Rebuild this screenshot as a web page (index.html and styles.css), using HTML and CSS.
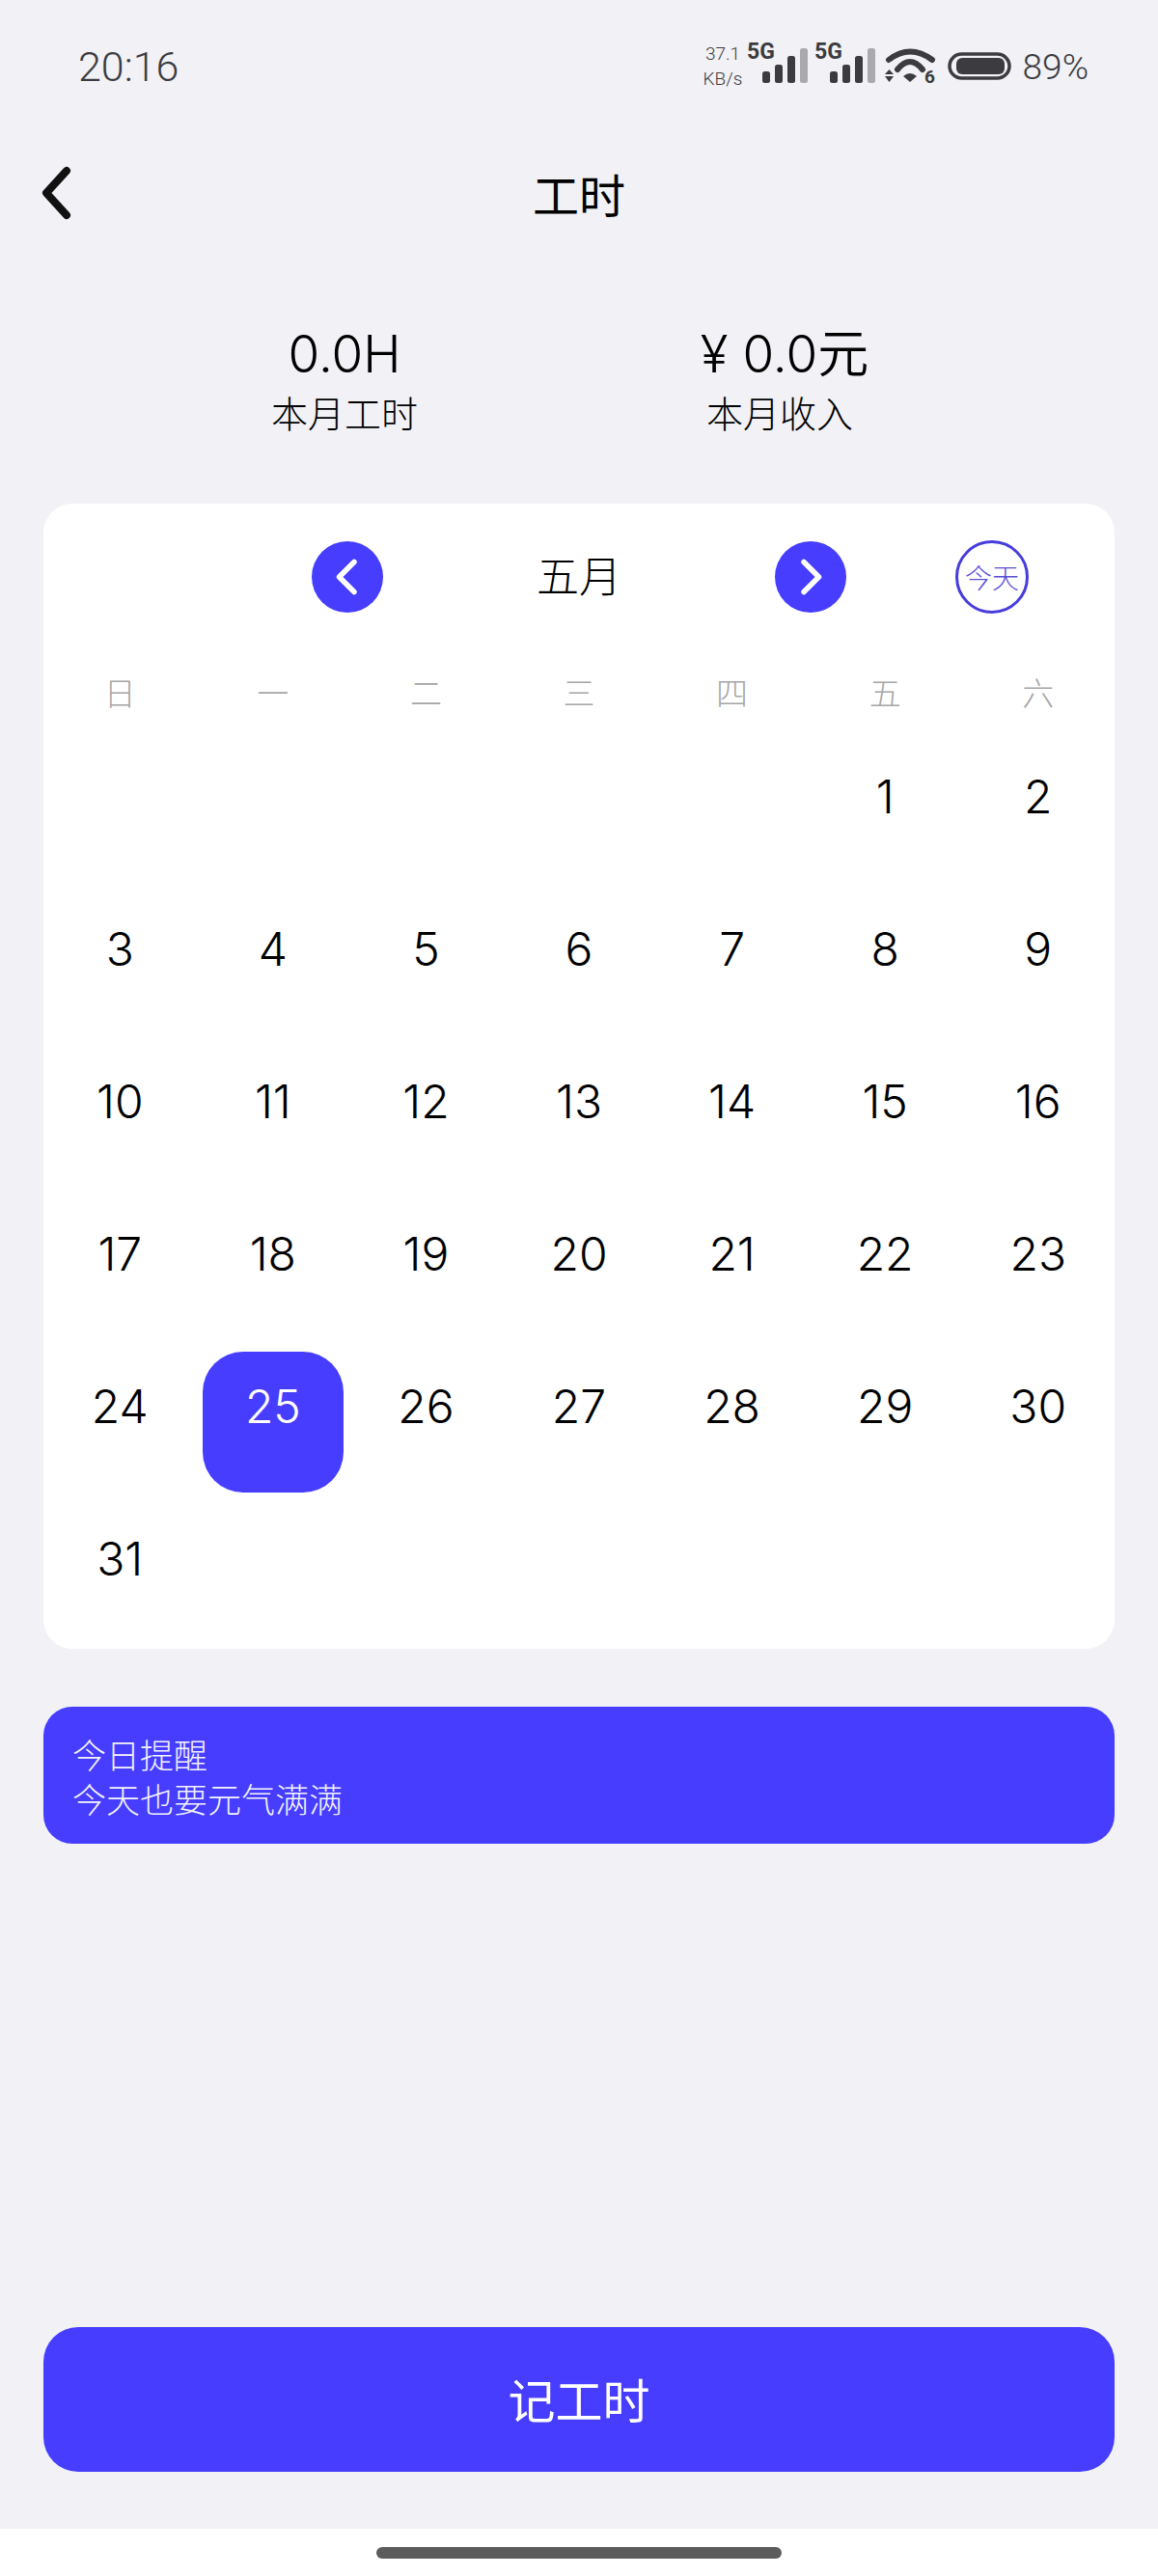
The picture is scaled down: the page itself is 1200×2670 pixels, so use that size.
FILE: index.html
```html
<!DOCTYPE html>
<html lang="zh-CN">
<head>
<meta charset="utf-8">
<title>工时</title>
<link rel="stylesheet" href="styles.css">
</head>
<body>
<div class="screen">
  <div class="statusbar">
    <span class="time">20:16</span>
    <svg class="status-icons" width="326" height="56" viewBox="0 0 326 56">
      <text class="speed" x="20" y="22" text-anchor="middle">37.1</text>
      <text class="speed" x="20" y="48" text-anchor="middle">KB/s</text>
      <text class="net" x="45" y="21">5G</text>
      <text class="net" x="115" y="21">5G</text>
      <g fill="#3c3c40">
        <rect x="61" y="34" width="8" height="12" rx="2.5"/>
        <rect x="74" y="27" width="8" height="19" rx="2.5"/>
        <rect x="87" y="18" width="8" height="28" rx="2.5"/>
        <rect x="131" y="34" width="8" height="12" rx="2.5"/>
        <rect x="144" y="27" width="8" height="19" rx="2.5"/>
        <rect x="157" y="18" width="8" height="28" rx="2.5"/>
      </g>
      <g fill="#aaaaad">
        <rect x="100" y="10" width="8" height="36" rx="2.5"/>
        <rect x="170" y="10" width="8" height="36" rx="2.5"/>
      </g>
      <g fill="none" stroke="#3c3c40" stroke-width="6" stroke-linecap="round">
        <path d="M192 22Q214 5 237 22"/>
        <path d="M201 32Q214 16 227 32"/>
      </g>
      <path fill="#3c3c40" d="M207 39Q214 33 221 39L214 45Z"/>
      <path fill="#3c3c40" d="M188 37l4.500-5 4.500 5ZM188 39l4.500 6 4.500-6Z"/>
      <text class="net net-small" x="229" y="46">6</text>
      <rect x="255" y="16" width="62" height="25" rx="12.500" fill="none" stroke="#3c3c40" stroke-width="3.500"/>
      <rect x="262" y="20" width="50" height="17" rx="6" fill="#3c3c40"/>
    </svg>
    <span class="battery">89%</span>
  </div>

  <header class="nav">
    <svg class="back" width="31" height="56" viewBox="0 0 31 56"><path d="M26 5L5 28L26 51" fill="none" stroke="#111" stroke-width="8" stroke-linecap="round" stroke-linejoin="round"/></svg>
    <h1 class="nav-title">工时</h1>
  </header>

  <section class="stats">
    <div class="stat">
      <div class="stat-value">0.0H</div>
      <div class="stat-label">本月工时</div>
    </div>
    <div class="stat">
      <div class="stat-value stat-value-money">¥ 0.0元</div>
      <div class="stat-label">本月收入</div>
    </div>
  </section>

  <section class="card">
    <div class="cal-head">
      <button class="arrow arrow-prev"><svg width="74" height="74" viewBox="0 0 74 74"><path d="M44 21.500L28.500 37L44 52.500" fill="none" stroke="#fff" stroke-width="5.500" stroke-linecap="round" stroke-linejoin="round"/></svg></button>
      <div class="month">五月</div>
      <button class="arrow"><svg width="74" height="74" viewBox="0 0 74 74"><path d="M30 21.500L45.500 37L30 52.500" fill="none" stroke="#fff" stroke-width="5.500" stroke-linecap="round" stroke-linejoin="round"/></svg></button>
      <div class="today-btn">今天</div>
    </div>
    <div class="weekdays">
      <span>日</span><span>一</span><span>二</span><span>三</span><span>四</span><span>五</span><span>六</span>
    </div>
    <div class="days">
      <span></span><span></span><span></span><span></span><span></span>
      <span>1</span><span>2</span>
      <span>3</span><span>4</span><span>5</span><span>6</span><span>7</span><span>8</span><span>9</span>
      <span>10</span><span>11</span><span>12</span><span>13</span><span>14</span><span>15</span><span>16</span>
      <span>17</span><span>18</span><span>19</span><span>20</span><span>21</span><span>22</span><span>23</span>
      <span>24</span><span class="selected">25</span><span>26</span><span>27</span><span>28</span><span>29</span><span>30</span>
      <span>31</span>
    </div>
  </section>

  <section class="reminder">
    <div>今日提醒</div>
    <div>今天也要元气满满</div>
  </section>

  <div class="spacer"></div>

  <button class="cta">记工时</button>

  <div class="homebar"><div class="home-pill"></div></div>
</div>
</body>
</html>
```
FILE: styles.css
```css
* { box-sizing: border-box; }
html, body { margin: 0; padding: 0; }
body {
  width: 1200px;
  height: 2670px;
  background: #f1f1f6;
  font-family: "Inter", "Noto Sans CJK SC", sans-serif;
  color: #000;
  overflow: hidden;
}
.screen { display: flex; flex-direction: column; height: 2670px; }

.statusbar {
  height: 136px;
  display: flex;
  align-items: flex-start;
  padding: 40px 72px 0 81px;
}
.time { font-family: "Roboto", sans-serif; font-size: 43px; line-height: 50px; font-weight: 300; color: #3c3c40; margin-top: 4px; }
.status-icons { margin-left: auto; flex: none; }
.speed { font-family: "Roboto", sans-serif; font-size: 19px; font-weight: 300; fill: #3c3c40; }
.net { font-family: "Roboto", sans-serif; font-size: 23px; font-weight: 700; fill: #3c3c40; }
.net-small { font-size: 19px; }
.battery { font-family: "Roboto", sans-serif; font-size: 37px; line-height: 50px; font-weight: 300; color: #3c3c40; margin: 5px 0 0 5px; }

.nav { height: 134px; position: relative; display: flex; align-items: center; justify-content: center; }
.back { position: absolute; left: 43px; top: 36px; }
.nav-title { margin: 0; font-size: 48px; font-weight: 400; line-height: 60px; padding-top: 1px; }

.stats { height: 252px; display: flex; padding: 63px 0 0 207px; gap: 151px; }
.stat { width: 300px; text-align: center; }
.stat-value { font-size: 53px; line-height: 68px; font-weight: 350; }
.stat-value-money { padding-left: 10px; }
.stat-label { font-size: 38px; line-height: 50px; font-weight: 300; margin-top: 3px; }

.card {
  margin: 0 45px;
  height: 1187px;
  background: #fff;
  border-radius: 30px;
  flex: none;
}
.cal-head { display: flex; align-items: center; padding: 38px 0 0 278px; }
.arrow {
  width: 74px; height: 74px; padding: 0; border: 0; border-radius: 50%;
  background: #463dff; display: block; flex: none;
}
.arrow svg { display: block; }
.month { width: 406px; text-align: center; font-size: 44px; line-height: 74px; font-weight: 300; }
.today-btn {
  margin-left: 113px; width: 76px; height: 76px; border-radius: 50%;
  border: 3px solid #463ddc; color: #5a50d6; font-size: 28px; font-weight: 300;
  display: flex; align-items: center; justify-content: center; flex: none;
}
.weekdays {
  display: grid; grid-template-columns: repeat(7, 1fr);
  margin-top: 58px; height: 69px;
  text-align: center; font-size: 33px; line-height: 50px; font-weight: 300; color: #a6a6a6;
}
.days { display: grid; grid-template-columns: repeat(7, 1fr); grid-auto-rows: 158px; }
.days span {
  display: block; justify-self: center; width: 146px; height: 146px; margin-top: 6px;
  text-align: center; font-size: 48px; line-height: 114px; font-weight: 350; border-radius: 42px;
}
.days .selected { background: #463dff; color: #fff; }

.reminder {
  margin: 60px 45px 0; height: 142px; background: #463dff; border-radius: 30px;
  padding: 28px 0 0 30px; color: #f2f2ff; font-size: 35px; line-height: 46px; font-weight: 300;
  flex: none;
}
.spacer { flex: 1; }
.cta {
  margin: 0 45px; height: 150px; padding: 0 0 4px; border: 0; border-radius: 36px; background: #463dff;
  color: #fff; font-family: inherit; font-size: 49px; font-weight: 400; flex: none;
}
.homebar { margin-top: 59px; height: 49px; background: #fff; padding-top: 19px; flex: none; }
.home-pill { width: 420px; height: 12px; margin: 0 auto; border-radius: 6px; background: #5c5c5c; }
```
